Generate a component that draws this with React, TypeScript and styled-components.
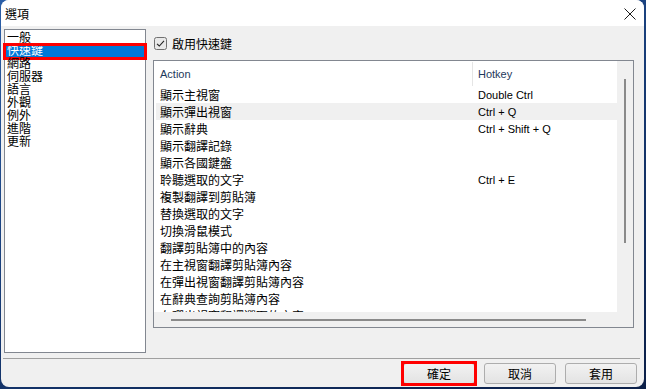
import styled, { createGlobalStyle } from 'styled-components';

const GlobalStyle = createGlobalStyle`
  html, body {
    margin: 0;
    padding: 0;
    width: 646px;
    height: 389px;
    overflow: hidden;
    background: linear-gradient(160deg, #2c5fa8 0%, #163a74 50%, #0b1f48 100%);
  }
  * {
    box-sizing: border-box;
  }
`;

const FONT = `"Liberation Sans", "Noto Sans CJK TC", sans-serif`;

const categories = ['一般', '快速鍵', '網路', '伺服器', '語言', '外觀', '例外', '進階', '更新'];

const actions: { name: string; hotkey?: string }[] = [
  { name: '顯示主視窗', hotkey: 'Double Ctrl' },
  { name: '顯示彈出視窗', hotkey: 'Ctrl + Q' },
  { name: '顯示辭典', hotkey: 'Ctrl + Shift + Q' },
  { name: '顯示翻譯記錄' },
  { name: '顯示各國鍵盤' },
  { name: '聆聽選取的文字', hotkey: 'Ctrl + E' },
  { name: '複製翻譯到剪貼簿' },
  { name: '替換選取的文字' },
  { name: '切換滑鼠模式' },
  { name: '翻譯剪貼簿中的內容' },
  { name: '在主視窗翻譯剪貼簿內容' },
  { name: '在彈出視窗翻譯剪貼簿內容' },
  { name: '在辭典查詢剪貼簿內容' },
  { name: '在彈出視窗翻譯選取的文字' },
];

const Window = styled.div`
  width: 643px;
  height: 387px;
  margin-left: 1px;
  background: #f0f0f0;
  border-radius: 8px;
  overflow: hidden;
  display: flex;
  flex-direction: column;
  font-family: ${FONT};
  color: #000;
`;

const TitleBar = styled.div`
  height: 26px;
  background: #fff;
  display: flex;
  align-items: center;
  justify-content: space-between;
  padding: 0 8px 0 4px;
`;

const Title = styled.span`
  font-size: 12px;
`;

const CloseIcon = styled.svg`
  display: block;
  margin-top: 1px;
`;

const Main = styled.div`
  height: 332px;
  display: flex;
  gap: 7px;
  padding: 3px 10px 0 3px;
`;

const CategoryList = styled.div`
  width: 142px;
  height: 324px;
  background: #fff;
  border: 1px solid #828790;
  padding-top: 2px;
`;

const CategoryItem = styled.div<{ $selected?: boolean }>`
  height: 13px;
  line-height: 13px;
  font-size: 12px;
  padding-left: 2px;
  white-space: nowrap;
  background: ${(p) => (p.$selected ? '#0078d7' : 'transparent')};
  color: ${(p) => (p.$selected ? '#fff' : '#000')};
  outline: ${(p) => (p.$selected ? '3px solid #ff0000' : 'none')};
  outline-offset: -1px;
  position: relative;
`;

const RightPanel = styled.div`
  width: 481px;
  display: flex;
  flex-direction: column;
  padding-top: 8px;
`;

const CheckRow = styled.label`
  height: 13px;
  display: flex;
  align-items: center;
  gap: 5px;
  font-size: 12px;
  padding-left: 1px;
`;

const TableFrame = styled.div`
  margin-top: 10px;
  width: 481px;
  height: 268px;
  border: 1px solid #828790;
  display: grid;
  grid-template-columns: 1fr 16px;
  grid-template-rows: 1fr 15px;
`;

const ListView = styled.div`
  background: #fff;
  overflow: hidden;
  padding-left: 2px;
`;

const Header = styled.div`
  height: 25px;
  display: flex;
  align-items: center;
  font-size: 11px;
  color: #1e395b;
`;

const HeaderCell = styled.div<{ $width?: number }>`
  width: ${(p) => (p.$width ? `${p.$width}px` : 'auto')};
  padding-left: ${(p) => (p.$width ? '4px' : '5px')};
`;

const HeaderDivider = styled.div`
  width: 1px;
  align-self: stretch;
  margin: 1px 0 0;
  background: #e5e5e5;
`;

const Row = styled.div<{ $hover?: boolean }>`
  height: 17px;
  display: flex;
  align-items: center;
  background: ${(p) => (p.$hover ? '#f0f0f0' : 'transparent')};
  white-space: nowrap;
`;

const ActionCell = styled.div`
  width: 317px;
  padding-left: 4px;
  font-size: 12px;
`;

const HotkeyCell = styled.div`
  padding-left: 5px;
  font-size: 11px;
`;

const VScroll = styled.div`
  background: #f0f0f0;
  padding: 18px 0 0 7px;
`;

const VThumb = styled.div`
  width: 2px;
  height: 164px;
  background: #8a8a8a;
`;

const HScroll = styled.div`
  background: #f0f0f0;
  padding: 7px 0 0 17px;
`;

const HThumb = styled.div`
  width: 415px;
  height: 2px;
  background: #8a8a8a;
`;

const Corner = styled.div`
  background: #f0f0f0;
`;

const Separator = styled.div`
  height: 1px;
  background: #a0a0a0;
  margin: 0 4px 0 2px;
`;

const ButtonRow = styled.div`
  display: flex;
  justify-content: flex-end;
  gap: 9px;
  padding: 4px 7px 0 0;
`;

const Marker = styled.span`
  display: flex;
  outline: 3px solid #ff0000;
  outline-offset: -1px;
`;

const DialogButton = styled.button`
  width: 72px;
  height: 21px;
  padding: 0;
  border: 1px solid #adadad;
  border-radius: 3px;
  background: linear-gradient(#f2f2f2, #e3e3e3);
  font-family: ${FONT};
  font-size: 12px;
  color: #000;
`;

const CheckBox = () => (
  <svg width="13" height="13" viewBox="0 0 13 13">
    <rect x="0.5" y="0.5" width="12" height="12" rx="2" fill="#e8e8e8" stroke="#707070" />
    <path d="M3 6.8 L5.3 9 L10 3.8" fill="none" stroke="#222" strokeWidth="1.1" />
  </svg>
);

export default function App() {
  return (
    <>
      <GlobalStyle />
      <Window>
        <TitleBar>
          <Title>選項</Title>
          <CloseIcon width="12" height="12" viewBox="0 0 12 12">
            <path d="M0.5 0.5 L11.5 11.5 M11.5 0.5 L0.5 11.5" stroke="#1a1a1a" strokeWidth="1" />
          </CloseIcon>
        </TitleBar>
        <Main>
          <CategoryList>
            {categories.map((c) => (
              <CategoryItem key={c} $selected={c === '快速鍵'}>
                {c}
              </CategoryItem>
            ))}
          </CategoryList>
          <RightPanel>
            <CheckRow>
              <CheckBox />
              啟用快速鍵
            </CheckRow>
            <TableFrame>
              <ListView>
                <Header>
                  <HeaderCell $width={316}>Action</HeaderCell>
                  <HeaderDivider />
                  <HeaderCell>Hotkey</HeaderCell>
                </Header>
                {actions.map((a, i) => (
                  <Row key={a.name} $hover={i === 1}>
                    <ActionCell>{a.name}</ActionCell>
                    <HotkeyCell>{a.hotkey}</HotkeyCell>
                  </Row>
                ))}
              </ListView>
              <VScroll>
                <VThumb />
              </VScroll>
              <HScroll>
                <HThumb />
              </HScroll>
              <Corner />
            </TableFrame>
          </RightPanel>
        </Main>
        <Separator />
        <ButtonRow>
          <Marker>
            <DialogButton>確定</DialogButton>
          </Marker>
          <DialogButton>取消</DialogButton>
          <DialogButton>套用</DialogButton>
        </ButtonRow>
      </Window>
    </>
  );
}
